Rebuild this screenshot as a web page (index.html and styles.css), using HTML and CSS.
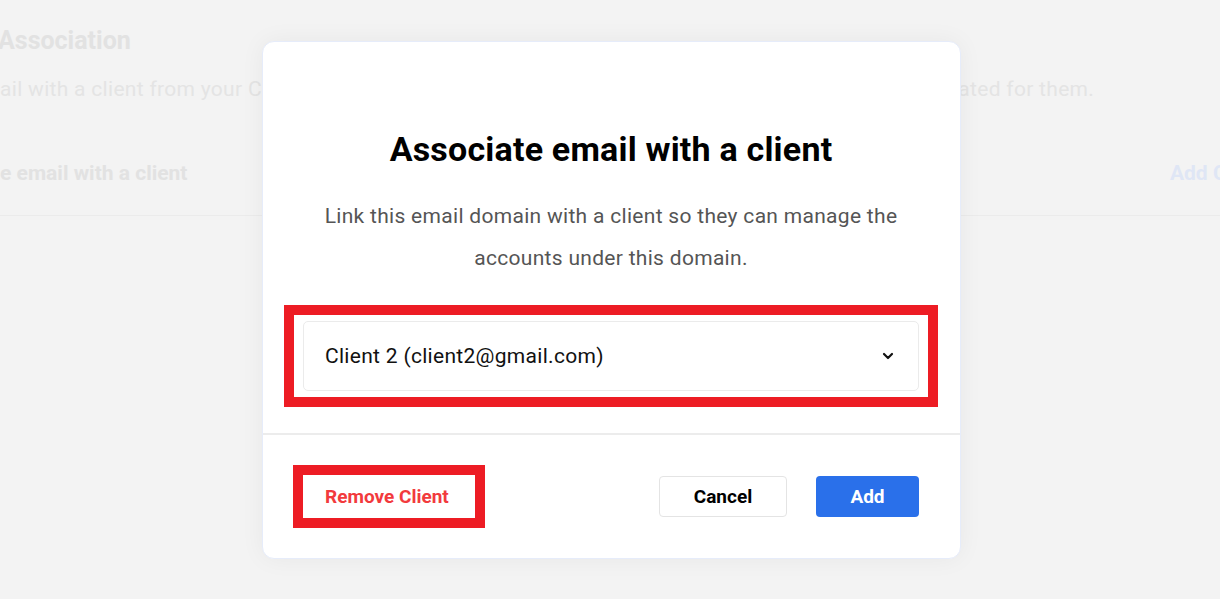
FILE: index.html
```html
<!DOCTYPE html>
<html lang="en">
<head>
<meta charset="utf-8">
<title>Associate email with a client</title>
<link rel="stylesheet" href="styles.css">
</head>
<body>
<div class="page">
  <h1 class="bg-title">Association</h1>
  <p class="bg-text">ail with a client from your Clients list so that they can view and manage all of the email accounts created for them.</p>
  <div class="bg-row">
    <span class="bg-row-label">e email with a client</span>
    <span class="bg-row-action">Add Client</span>
  </div>
</div>

<div class="modal">
  <div class="modal-body">
    <h2 class="modal-title">Associate email with a client</h2>
    <p class="modal-desc">Link this email domain with a client so they can manage the accounts under this domain.</p>
    <div class="highlight highlight-select">
      <div class="select">
        <span class="select-value">Client 2 (client2@gmail.com)</span>
        <svg class="chevron" width="12" height="8" viewBox="0 0 12 8"><path d="M2 2 L6 6 L10 2" fill="none" stroke="#111" stroke-width="2.2" stroke-linecap="round" stroke-linejoin="round"/></svg>
      </div>
    </div>
  </div>
  <div class="modal-footer">
    <div class="highlight highlight-remove">
      <button class="btn btn-remove">Remove Client</button>
    </div>
    <div class="footer-actions">
      <button class="btn btn-cancel">Cancel</button>
      <button class="btn btn-add">Add</button>
    </div>
  </div>
</div>
</body>
</html>
```

FILE: styles.css
```css
* { box-sizing: border-box; }
html, body {
  margin: 0;
  padding: 0;
  width: 1220px;
  height: 599px;
  overflow: hidden;
  background: #f3f3f3;
  font-family: Roboto, "Noto Sans", Arial, sans-serif;
}
.page {
  position: relative;
  width: 1220px;
  height: 599px;
  overflow: hidden;
}
.bg-title {
  margin: 0;
  padding-top: 26px;
  margin-left: -2px;
  font-size: 25px;
  line-height: 30px;
  font-weight: 700;
  color: #e2e2e2;
}
.bg-text {
  margin: 0;
  margin-top: 19px;
  font-size: 21px;
  line-height: 28px;
  letter-spacing: 0.3px;
  color: #e4e4e4;
  white-space: nowrap;
}
.bg-row {
  display: flex;
  justify-content: space-between;
  align-items: center;
  margin-top: 55px;
  padding-bottom: 27px;
  border-bottom: 1px solid #ebebeb;
  width: 1260px;
}
.bg-row-label,
.bg-row-action {
  font-size: 21px;
  line-height: 30px;
  font-weight: 700;
  color: #e2e2e2;
}
.bg-row-action {
  color: #dfe6f5;
  margin-right: -8px;
}

.modal {
  position: absolute;
  left: 262px;
  top: 41px;
  width: 699px;
  height: 518px;
  background: #fff;
  border: 1px solid #e6ecfa;
  border-radius: 12px;
  box-shadow: 0 0 24px rgba(0, 0, 0, 0.05);
  display: flex;
  flex-direction: column;
}
.modal-body {
  padding: 87px 22px 26px 21px;
  border-bottom: 2px solid #ececec;
  display: flex;
  flex-direction: column;
  align-items: stretch;
}
.modal-title {
  margin: 0;
  text-align: center;
  font-size: 34px;
  line-height: 40px;
  letter-spacing: 0.2px;
  font-weight: 700;
  color: #000;
}
.modal-desc {
  margin: 26px 20px 26px;
  text-align: center;
  font-size: 21px;
  line-height: 42px;
  letter-spacing: 0.3px;
  color: #555;
}
.highlight {
  border: 10px solid #ed1c24;
}
.highlight-select {
  padding: 6px 9px;
}
.select {
  height: 70px;
  border: 1px solid #ebebeb;
  border-radius: 5px;
  display: flex;
  align-items: center;
  justify-content: space-between;
  padding: 0 24px 0 21px;
}
.select-value {
  font-size: 21px;
  letter-spacing: 0.3px;
  color: #111;
}
.chevron { display: block; }

.modal-footer {
  flex: 1;
  display: flex;
  align-items: center;
  justify-content: space-between;
  padding: 0 41px 0 30px;
}
.btn {
  font-family: inherit;
  font-weight: 700;
  font-size: 19px;
  cursor: pointer;
  border-radius: 4px;
  height: 41px;
}
.highlight-remove {
  padding: 0;
}
.btn-remove {
  width: 172px;
  height: 43px;
  border: 0;
  background: #fff;
  color: #f23a3d;
  border-radius: 0;
  text-align: left;
  padding: 0 0 0 22px;
}
.footer-actions {
  display: flex;
  gap: 29px;
}
.btn-cancel {
  width: 128px;
  background: #fff;
  color: #000;
  border: 1px solid #e4e4e4;
}
.btn-add {
  width: 103px;
  background: #2a70ea;
  color: #fff;
  border: 0;
}
```
